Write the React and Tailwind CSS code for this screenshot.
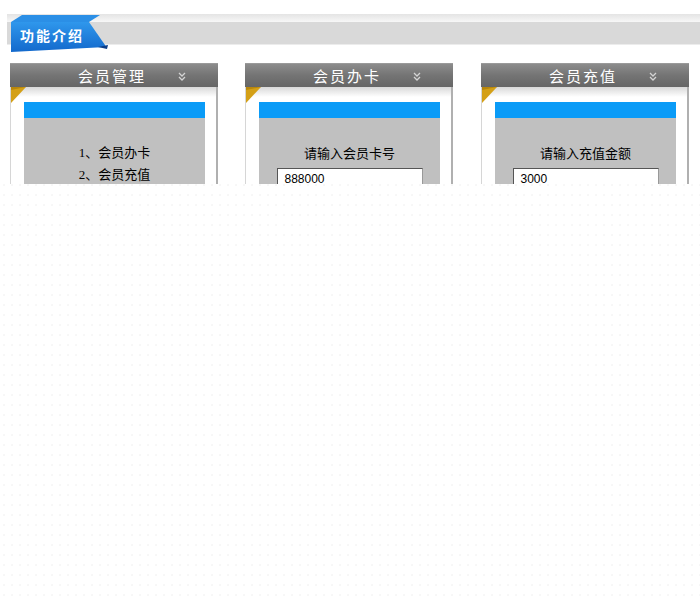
import React from "react";

function Chevrons() {
  return (
    <svg width="8" height="10" viewBox="0 0 8 10" className="absolute right-[32px] top-[8px]">
      <path d="M1 1 L4 4 L7 1" fill="none" stroke="#d4d4d4" strokeWidth="1.3" />
      <path d="M1 5 L4 8 L7 5" fill="none" stroke="#d4d4d4" strokeWidth="1.3" />
    </svg>
  );
}

function Panel({ title, children }) {
  return (
    <div className="w-[208px] shrink-0 flex flex-col">
      <div className="relative h-[24px] bg-gradient-to-b from-[#8c8c8c] via-[#747474] to-[#666666] border-t border-[#9a9a9a] flex items-center justify-center">
        <span
          className="text-white text-[15px] tracking-[2px] leading-none pr-[4px]"
          style={{ fontFamily: '"Noto Sans CJK SC", sans-serif' }}
        >
          {title}
        </span>
        <Chevrons />
      </div>
      <div className="relative bg-white border-l border-[#d6d6d6] border-r-2 border-r-[#b0b0b0] h-[120px] pl-[13px] pr-[11px] pt-[15px]">
        <div className="absolute left-0 right-0 top-0 h-[10px] bg-gradient-to-b from-[#cfcfcf] to-white opacity-80" />
        <svg width="15" height="16" viewBox="0 0 15 16" className="absolute left-0 top-0">
          <polygon points="0,0 15,0 0,16" fill="#d4a017" />
          <polygon points="0,0 15,0 0,3" fill="#b8860b" />
        </svg>
        <div className="relative h-[16px] bg-[#0a9bf7]" />
        <div className="relative bg-[#c0c0c0] h-[100px] flex flex-col items-center pt-[26px]">
          {children}
        </div>
      </div>
    </div>
  );
}

const serif = { fontFamily: '"Liberation Serif", "Noto Sans CJK SC", serif' };

function InputBox({ value }) {
  return (
    <div className="mt-[5px] w-[146px] h-[22px] bg-white border border-[#555] border-r-[#999] border-b-[#999] pl-[7px] flex items-center text-[12px] text-black"
      style={{ fontFamily: '"Liberation Sans", Arial, sans-serif' }}>
      {value}
    </div>
  );
}

export default function App() {
  return (
    <div
      className="w-[700px] h-[601px] bg-white bg-[radial-gradient(circle,#f3f3f3_0.6px,transparent_0.9px)] bg-[length:8px_10px]"
    >
      <div className="h-[184px] overflow-hidden bg-white relative">
        <div className="pt-[14px] pl-[7px]">
          <div className="h-[8px] bg-gradient-to-b from-[#e4e4e4] to-[#f7f7f7]" />
          <div className="h-[22px] bg-[#d9d9d9]" />
          <div className="h-[1px] bg-[#ececec]" />
        </div>
        <svg width="100" height="40" viewBox="0 0 100 40" className="absolute left-[10px] top-[14px]">
          <defs>
            <linearGradient id="tabg" x1="0" y1="0" x2="0" y2="1">
              <stop offset="0" stopColor="#2f97ec" />
              <stop offset="1" stopColor="#1369cc" />
            </linearGradient>
          </defs>
          <polygon points="1,8 12,1 90,1 79,8" fill="#2b8fe6" />
          <polygon points="1,8 79,8 95,31 96,33 1,38" fill="url(#tabg)" />
          <polygon points="88,33 98,31 97,35" fill="#0b3c86" />
        </svg>
        <div
          className="absolute left-[20px] top-[28px] text-white font-bold text-[14px] tracking-[2px] leading-none"
          style={{ fontFamily: '"Noto Sans CJK SC", sans-serif' }}
        >
          功能介绍
        </div>

        <div className="flex pl-[10px] gap-[27px] mt-[18px]">
          <Panel title="会员管理">
            <div className="text-[13px] leading-[22px] text-black flex flex-col items-start -mt-[2px]" style={serif}>
              <div>1、会员办卡</div>
              <div>2、会员充值</div>
            </div>
          </Panel>
          <Panel title="会员办卡">
            <div className="text-[13px] leading-[18px] text-black mt-[1px]" style={serif}>请输入会员卡号</div>
            <InputBox value="888000" />
          </Panel>
          <div className="ml-[1px]">
            <Panel title="会员充值">
              <div className="text-[13px] leading-[18px] text-black mt-[1px]" style={serif}>请输入充值金额</div>
              <InputBox value="3000" />
            </Panel>
          </div>
        </div>
      </div>
    </div>
  );
}
